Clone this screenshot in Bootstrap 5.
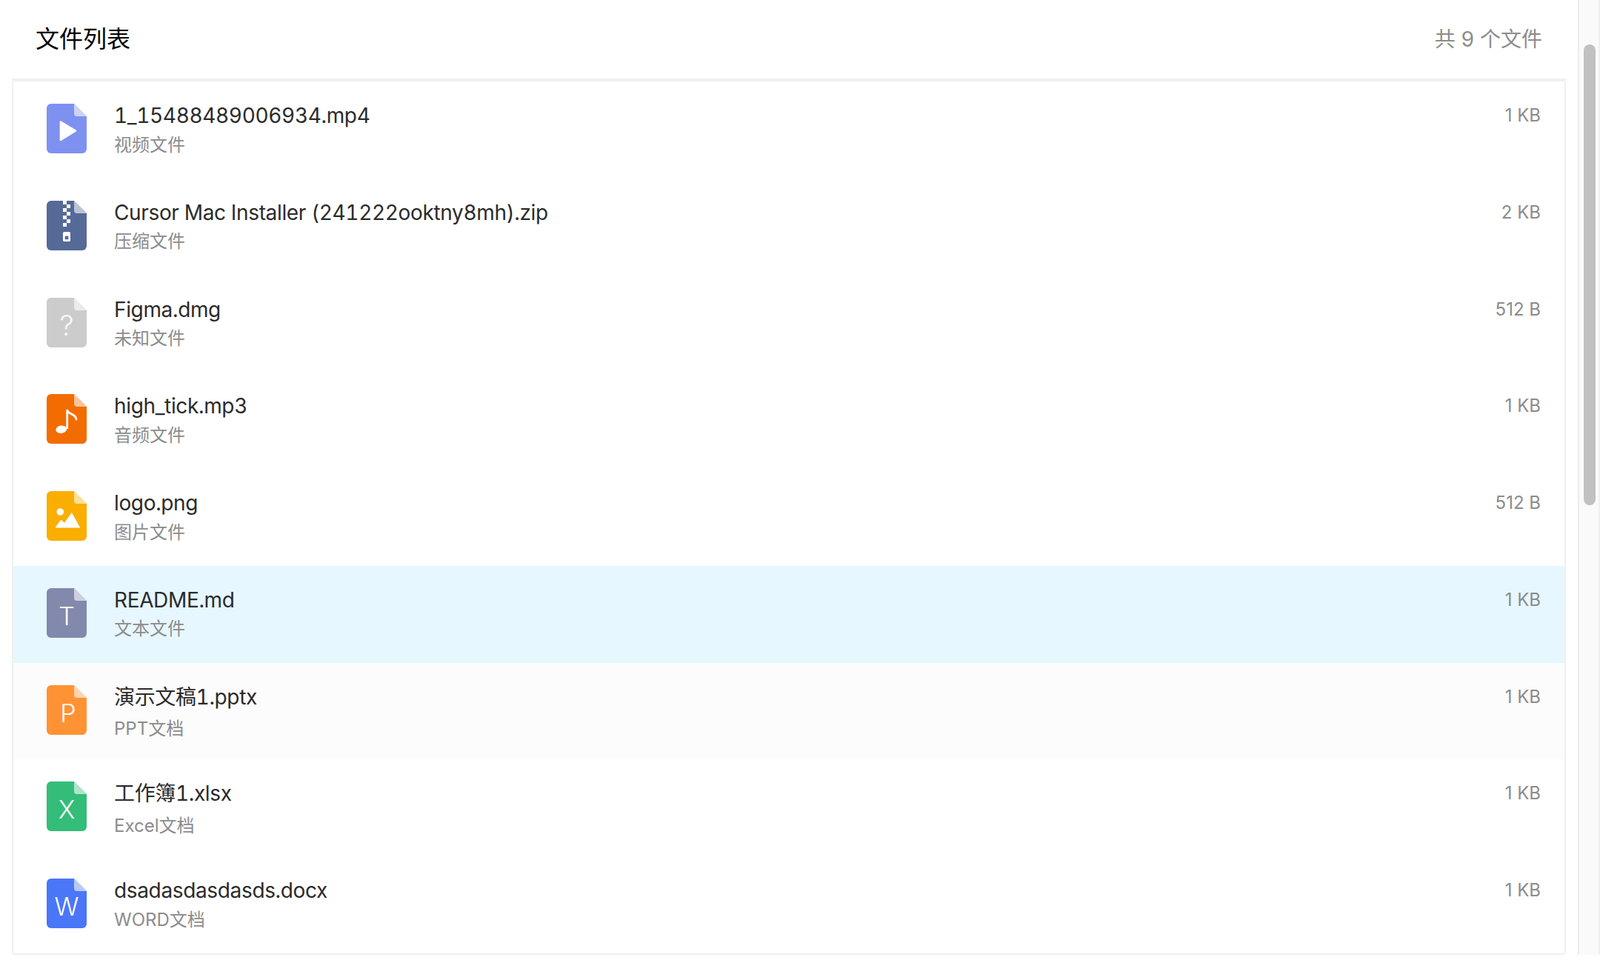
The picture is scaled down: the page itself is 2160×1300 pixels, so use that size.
<!DOCTYPE html>
<html lang="zh-CN">
<head>
    <meta charset="UTF-8">
    <meta name="viewport" content="width=device-width, initial-scale=1.0">
    <title>文件列表</title>
    <link href="https://cdn.jsdelivr.net/npm/bootstrap@5.3.0/dist/css/bootstrap.min.css" rel="stylesheet">
    <style>
        html, body {
            height: 1300px;
            overflow: hidden;
        }
        body {
            background-color: #fff;
            font-family: Inter, "Noto Sans CJK SC", sans-serif;
        }
        .page-main {
            width: 2130px;
            padding: 0 16px;
        }
        .list-head {
            height: 108px;
            padding: 0 32px;
            border-bottom: 2px solid #f0f0f0;
        }
        .list-title {
            font-size: 32px;
            color: #000;
        }
        .list-count {
            font-size: 28px;
            color: #8c8c8c;
            font-variant-numeric: tabular-nums;
        }
        .file-list {
            border: 2px solid #f0f0f0;
            border-radius: 4px;
            height: 1181px;
        }
        .file-row {
            height: 130.8px;
            padding: 30px 32px 0 45px;
            border: 0;
            background: #fff;
        }
        .file-row.is-active { background: #e6f7ff; }
        .file-row.is-hover { background: #fcfcfc; }
        .file-icon {
            width: 54px;
            height: 67px;
            margin-right: 37px;
            flex: none;
        }
        .file-icon text {
            font-family: Inter, sans-serif;
            font-weight: 300;
            fill: #fff;
            text-anchor: middle;
        }
        .file-name {
            font-size: 28px;
            line-height: 34px;
            margin-top: -1px;
            color: #2b2b2b;
            letter-spacing: -.35px;
            font-variant-numeric: tabular-nums;
        }
        .file-kind {
            font-size: 24px;
            line-height: 30px;
            margin-top: 7.5px;
            color: #8c8c8c;
        }
        .file-size {
            font-size: 24px;
            line-height: 34px;
            margin-top: -1px;
            color: #8c8c8c;
        }
        .row-cjk .file-kind { margin-top: 11.5px; }
        .fake-track {
            width: 30px;
            padding: 60px 4px 0 6px;
            background: #fafafa;
            border-left: 2px solid #ececec;
            border-right: 2px solid #f0f0f0;
        }
        .fake-thumb {
            width: 16px;
            height: 622px;
            border-radius: 8px;
            background: #c1c1c1;
        }
    </style>
</head>
<body>
<div class="d-flex">
    <div class="page-main">
        <div class="list-head d-flex justify-content-between align-items-center">
            <div class="list-title">文件列表</div>
            <div class="list-count">共 9 个文件</div>
        </div>
        <ul class="file-list list-group" id="fileList"></ul>
    </div>
    <div class="fake-track">
        <div class="fake-thumb"></div>
    </div>
</div>

<script src="https://cdn.jsdelivr.net/npm/bootstrap@5.3.0/dist/js/bootstrap.bundle.min.js"></script>
<script>
    // contenu de chaque icone, dessine dans un repere 54x67
    const glyphs = {
        video: '<path d="M19 24.5 L39 36.5 L19 49 Z" fill="#fff" stroke="#fff" stroke-width="2.6" stroke-linejoin="round"/>',
        zip: c => `<path d="M22 0h5v5h5v5h-5v5h5v5h-5v5h5v5h-5v5h-5v-5h5v-5h-5v-5h5v-5h-5v-5h5V5h-5z" fill="#fff"/>
                   <rect x="22" y="42" width="10" height="13" rx="1.5" fill="#fff"/>
                   <rect x="24.7" y="47.6" width="4.6" height="4.6" fill="${c}"/>`,
        unknown: '<text x="27" y="51" font-size="38" opacity=".85">?</text>',
        audio: `<ellipse cx="19.7" cy="47.7" rx="7.4" ry="5.2" fill="#fff" transform="rotate(-8 19.7 47.7)"/>
                <path d="M27.7 47 V22.5" stroke="#fff" stroke-width="2.8" fill="none"/>
                <path d="M27.7 22 C30 28 39 26 40 34" stroke="#fff" stroke-width="2.8" fill="none" stroke-linecap="round"/>`,
        image: `<circle cx="18.3" cy="28" r="4.8" fill="#fff"/>
                <path d="M12 49 L19.5 39 L24 43.5 L33.7 29.5 L44.5 49 Z" fill="#fff" stroke="#fff" stroke-width="1" stroke-linejoin="round"/>`,
        text: '<text x="27" y="50" font-size="34">T</text>',
        ppt: '<text x="29" y="50" font-size="34">P</text>',
        xls: '<text x="27" y="50" font-size="34">X</text>',
        doc: '<text x="27" y="50" font-size="34">W</text>'
    };

    const files = [
        { name: '1_15488489006934.mp4', kind: '视频文件', size: '1 KB', icon: 'video', color: '#7f91f0' },
        { name: 'Cursor Mac Installer (241222ooktny8mh).zip', kind: '压缩文件', size: '2 KB', icon: 'zip', color: '#566a98' },
        { name: 'Figma.dmg', kind: '未知文件', size: '512 B', icon: 'unknown', color: '#cccccc' },
        { name: 'high_tick.mp3', kind: '音频文件', size: '1 KB', icon: 'audio', color: '#f36c00' },
        { name: 'logo.png', kind: '图片文件', size: '512 B', icon: 'image', color: '#f9ae00' },
        { name: 'README.md', kind: '文本文件', size: '1 KB', icon: 'text', color: '#8389ac', cls: 'is-active' },
        { name: '演示文稿1.pptx', kind: 'PPT文档', size: '1 KB', icon: 'ppt', color: '#ff9234', cls: 'is-hover row-cjk' },
        { name: '工作簿1.xlsx', kind: 'Excel文档', size: '1 KB', icon: 'xls', color: '#33bd79', cls: 'row-cjk' },
        { name: 'dsadasdasdasds.docx', kind: 'WORD文档', size: '1 KB', icon: 'doc', color: '#4a76f8' }
    ];

    const list = document.getElementById('fileList');
    files.forEach(f => {
        const g = glyphs[f.icon];
        const li = document.createElement('li');
        li.className = 'file-row list-group-item d-flex rounded-0 ' + (f.cls || '');
        li.innerHTML = `
            <svg class="file-icon" viewBox="0 0 54 67">
                <path d="M6 0H37L54 17V61a6 6 0 0 1-6 6H6a6 6 0 0 1-6-6V6a6 6 0 0 1 6-6z" fill="${f.color}"/>
                ${typeof g === 'function' ? g(f.color) : g}
                <path d="M37 0L54 17H41a4 4 0 0 1-4-4z" fill="#fff" fill-opacity=".6"/>
            </svg>
            <div class="flex-grow-1">
                <div class="file-name">${f.name}</div>
                <div class="file-kind">${f.kind}</div>
            </div>
            <div class="file-size">${f.size}</div>`;
        list.appendChild(li);
    });
</script>
</body>
</html>
